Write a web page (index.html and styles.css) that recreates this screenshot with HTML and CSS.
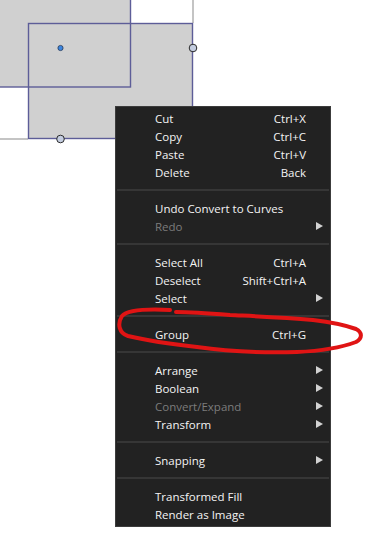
FILE: index.html
```html
<!DOCTYPE html>
<html lang="en">
<head>
  <meta charset="UTF-8">
  <title>Context menu</title>
  <link rel="stylesheet" href="styles.css">
</head>
<body>
  <div class="stage">
    <svg class="canvas" width="365" height="547" viewBox="0 0 365 547">
      <line x1="193" y1="0" x2="193" y2="23" stroke="#c4c4c4" stroke-width="2"/>
      <line x1="0" y1="139" x2="28" y2="139" stroke="#c4c4c4" stroke-width="2"/>
      <rect x="-10" y="-10" width="140.5" height="97" fill="#d0d0d0"/>
      <rect x="28.5" y="23.5" width="164" height="115" fill="#d0d0d0"/>
      <rect x="-10" y="-10" width="140.5" height="97" fill="none" stroke="#5d5d98" stroke-width="1.4"/>
      <rect x="28.5" y="23.5" width="164" height="115" fill="none" stroke="#5d5d98" stroke-width="1.4"/>
      <circle cx="60.5" cy="48" r="2.6" fill="#3c86e0" stroke="#2a3a55" stroke-width="0.8"/>
      <circle cx="193" cy="48" r="3.8" fill="#c4cde0" stroke="#2a2a2a" stroke-width="1"/>
      <circle cx="60.5" cy="139" r="3.8" fill="#c4cde0" stroke="#2a2a2a" stroke-width="1"/>
    </svg>

    <div class="menu">
      <div class="item"><span class="label">Cut</span><span class="key">Ctrl+X</span></div>
      <div class="item"><span class="label">Copy</span><span class="key">Ctrl+C</span></div>
      <div class="item"><span class="label">Paste</span><span class="key">Ctrl+V</span></div>
      <div class="item"><span class="label">Delete</span><span class="key">Back</span></div>
      <div class="sep"></div>
      <div class="item"><span class="label">Undo Convert to Curves</span></div>
      <div class="item disabled"><span class="label">Redo</span><span class="arrow"></span></div>
      <div class="sep"></div>
      <div class="item"><span class="label">Select All</span><span class="key">Ctrl+A</span></div>
      <div class="item"><span class="label">Deselect</span><span class="key">Shift+Ctrl+A</span></div>
      <div class="item"><span class="label">Select</span><span class="arrow"></span></div>
      <div class="sep"></div>
      <div class="item"><span class="label">Group</span><span class="key">Ctrl+G</span></div>
      <div class="sep"></div>
      <div class="item"><span class="label">Arrange</span><span class="arrow"></span></div>
      <div class="item"><span class="label">Boolean</span><span class="arrow"></span></div>
      <div class="item disabled"><span class="label">Convert/Expand</span><span class="arrow"></span></div>
      <div class="item"><span class="label">Transform</span><span class="arrow"></span></div>
      <div class="sep"></div>
      <div class="item"><span class="label">Snapping</span><span class="arrow"></span></div>
      <div class="sep"></div>
      <div class="item"><span class="label">Transformed Fill</span></div>
      <div class="item"><span class="label">Render as Image</span></div>
    </div>

    <svg class="scribble" width="365" height="547" viewBox="0 0 365 547">
      <path d="M170 310 C150 309 128 309 122 316 C117 324 119 333 128 336 C145 340 170 344 197 347 C225 351 260 353 297 352 C320 351 340 348 356 342 C363 338 362 332 356 329 C345 325 330 322 313 320 C280 317 250 316 230 315 C205 313 188 312 176 312"
        fill="none" stroke="#e01414" stroke-width="4" stroke-linecap="round" stroke-linejoin="round"/>
    </svg>
  </div>
</body>
</html>
```

FILE: styles.css
```css
html, body { margin: 0; padding: 0; background: #fff; }
.stage { position: relative; width: 365px; height: 547px; overflow: hidden; }
.canvas, .scribble { position: absolute; left: 0; top: 0; }
.scribble { pointer-events: none; }

.menu {
  position: absolute; left: 115px; top: 106px; width: 214px;
  padding: 2px 0 3px; background: #222; border: 1px solid #3c3c3c;
  font-family: "Open Sans", "Noto Sans", sans-serif; font-size: 11.5px; color: #f4f4f4;
}
.item { display: flex; align-items: center; height: 18px; padding: 0 7px 0 39px; }
.label { flex: 1; white-space: nowrap; }
.key { margin-right: 17px; white-space: nowrap; }
.item.disabled { color: #7c7c7c; }
.arrow { width: 0; height: 0; border-left: 7px solid #d2d2d2; border-top: 4px solid transparent; border-bottom: 4px solid transparent; }
.sep { height: 18px; display: flex; align-items: center; padding: 0 1px; }
.sep::before { content: ""; flex: 1; height: 2px; background: #363636; }
```
